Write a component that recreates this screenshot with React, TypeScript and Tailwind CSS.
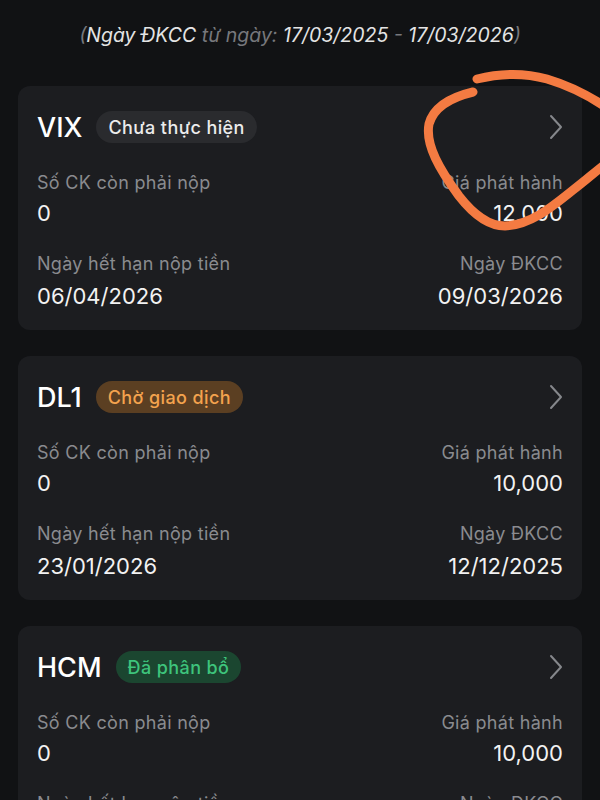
import * as React from "react";

interface Right {
  ticker: string;
  status: string;
  tone: "gray" | "orange" | "green";
  remain: string;
  price: string;
  deadline: string;
  recordDate: string;
}

const rights: Right[] = [
  { ticker: "VIX", status: "Chưa thực hiện", tone: "gray", remain: "0", price: "12,000", deadline: "06/04/2026", recordDate: "09/03/2026" },
  { ticker: "DL1", status: "Chờ giao dịch", tone: "orange", remain: "0", price: "10,000", deadline: "23/01/2026", recordDate: "12/12/2025" },
  { ticker: "HCM", status: "Đã phân bổ", tone: "green", remain: "0", price: "10,000", deadline: "15/01/2026", recordDate: "10/12/2025" },
];

const badgeTone = {
  gray: "bg-[#2a2b2e] text-[#ececec]",
  orange: "bg-[#5b3f22] text-[#f4a34e]",
  green: "bg-[#1b4630] text-[#3ec47c]",
};

function Chevron() {
  return (
    <svg width="14" height="26" viewBox="0 0 14 26" fill="none" className="shrink-0">
      <path d="M2 2 L12 13 L2 24" stroke="#85878b" strokeWidth="2" strokeLinecap="round" strokeLinejoin="round" />
    </svg>
  );
}

function RightCard({ item }: { item: Right }) {
  return (
    <div className="rounded-[12px] bg-[#1c1d20] px-[19px] pt-[25px] pb-[21px]">
      <div className="flex h-[32px] items-center justify-between">
        <div className="flex items-center gap-[14px]">
          <span className="text-[27px] font-medium leading-none text-white">{item.ticker}</span>
          <span className={"flex h-[32px] items-center rounded-full px-[12px] text-[18px] font-medium tracking-[0.4px] " + badgeTone[item.tone]}>
            {item.status}
          </span>
        </div>
        <Chevron />
      </div>
      <div className="mt-[28px] flex justify-between">
        <div className="flex flex-col">
          <span className="text-[18px] leading-[24px] tracking-[0.3px] text-[#8a8b8f]">Số CK còn phải nộp</span>
          <span className="mt-[5px] text-[22px] leading-[26px] text-[#f2f2f2]">{item.remain}</span>
          <span className="mt-[26px] text-[18px] leading-[24px] tracking-[0.3px] text-[#8a8b8f]">Ngày hết hạn nộp tiền</span>
          <span className="mt-[7px] text-[22px] leading-[26px] text-[#f2f2f2]">{item.deadline}</span>
        </div>
        <div className="flex flex-col items-end">
          <span className="text-[18px] leading-[24px] tracking-[0.3px] text-[#8a8b8f]">Giá phát hành</span>
          <span className="mt-[5px] text-[22px] leading-[26px] text-[#f2f2f2]">{item.price}</span>
          <span className="mt-[26px] text-[18px] leading-[24px] tracking-[0.3px] text-[#8a8b8f]">Ngày ĐKCC</span>
          <span className="mt-[7px] text-[22px] leading-[26px] text-[#f2f2f2]">{item.recordDate}</span>
        </div>
      </div>
    </div>
  );
}

export default function App() {
  return (
    <div className="relative h-[800px] w-[600px] overflow-hidden bg-[#111214] px-[18px] font-['Inter',sans-serif]">
      <div className="pt-[22px] pb-[38px] text-center text-[19.5px] italic leading-[26px] text-[#e4e4e4]">
        <span className="text-[#77787c]">(</span>Ngày ĐKCC <span className="text-[#77787c]">từ ngày:</span> 17/03/2025{" "}
        <span className="text-[#77787c]">-</span> 17/03/2026<span className="text-[#77787c]">)</span>
      </div>
      <div className="flex flex-col gap-[26px]">
        {rights.map((r) => (
          <RightCard key={r.ticker} item={r} />
        ))}
      </div>
      {/* hand-drawn annotation */}
      <svg className="pointer-events-none absolute left-0 top-0" width="600" height="800" viewBox="0 0 600 800" fill="none">
        <path
          d="M473 92 C452 97 434 106 429 124 C425 145 440 170 459 196 C473 214 488 226 505 226 C531 225 553 206 573 190 C586 180 595 172 604 165"
          stroke="#f47b42"
          strokeWidth="9"
          strokeLinecap="round"
          strokeLinejoin="round"
        />
        <path
          d="M477 79 C497 74 522 72 547 79 C567 85 586 94 604 106"
          stroke="#f47b42"
          strokeWidth="9"
          strokeLinecap="round"
          strokeLinejoin="round"
        />
      </svg>
    </div>
  );
}
